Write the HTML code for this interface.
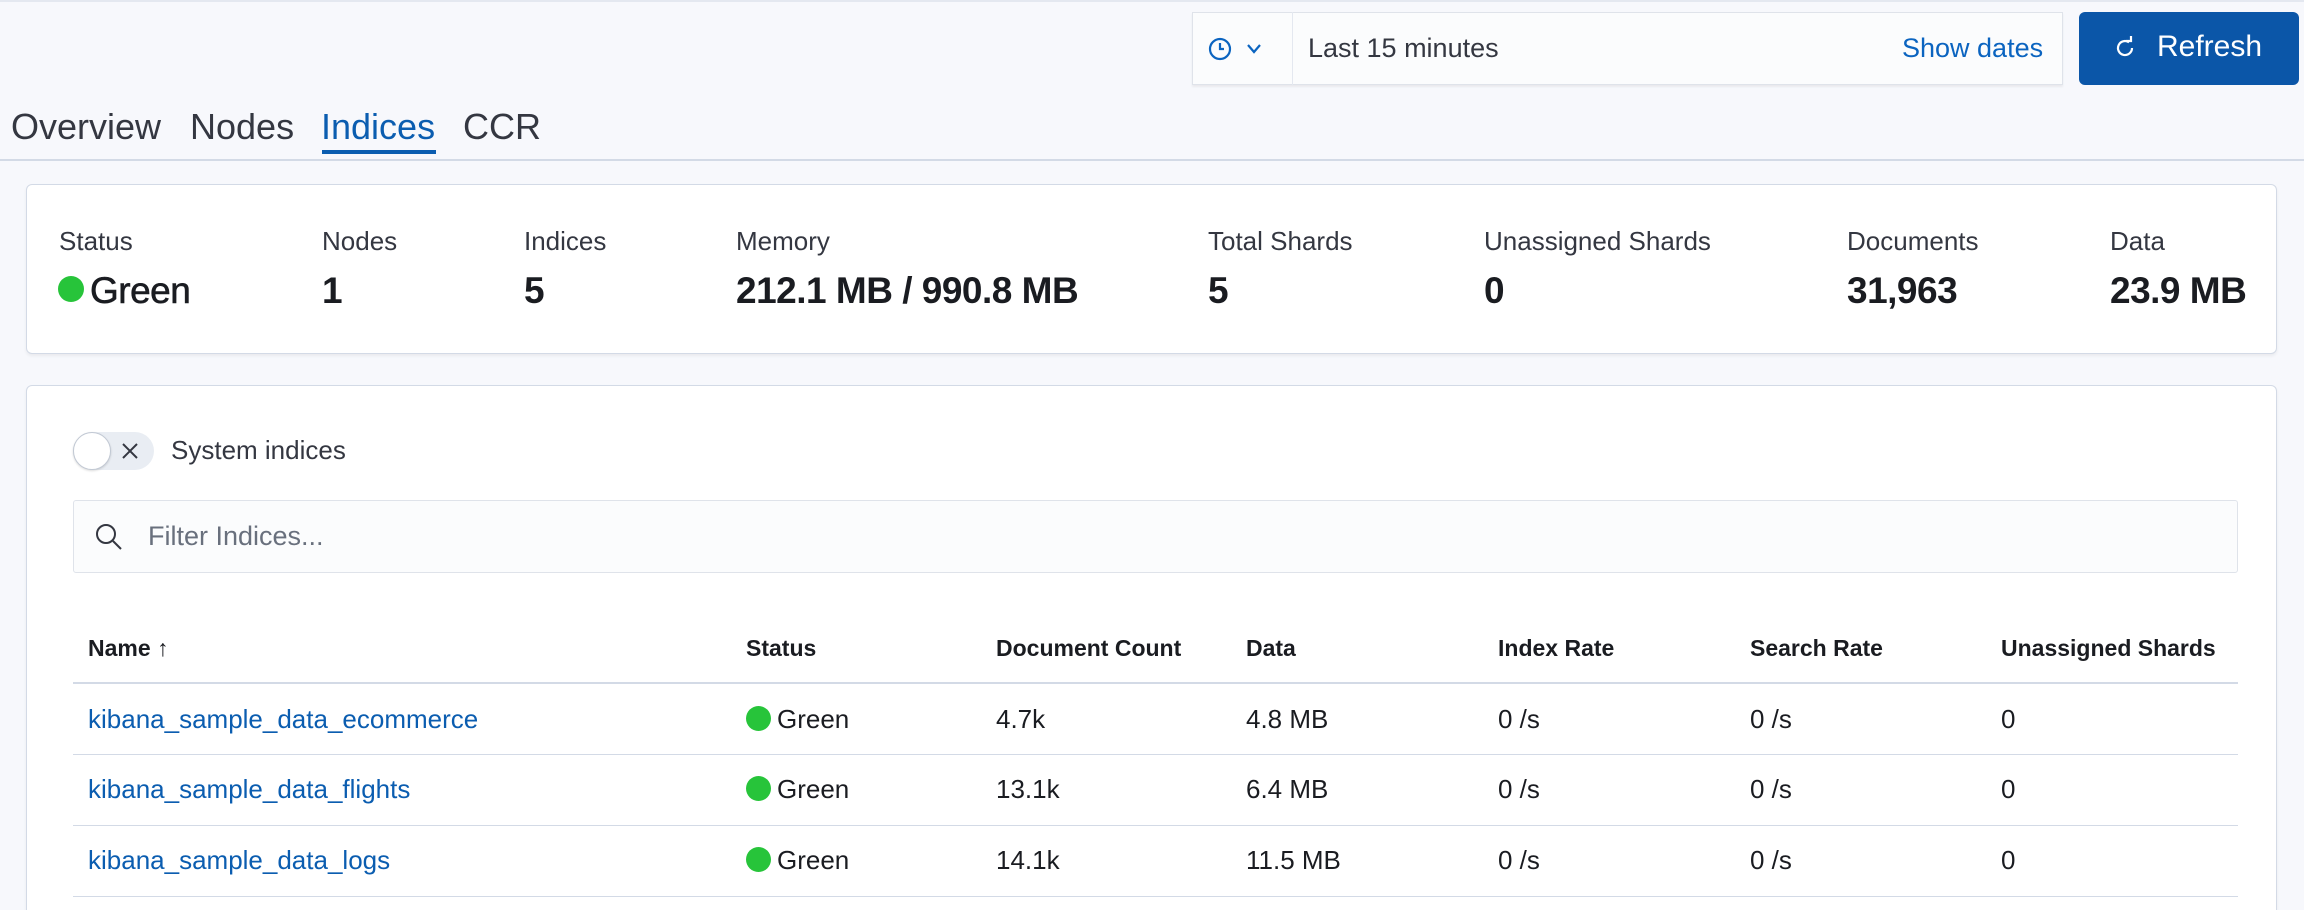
<!DOCTYPE html>
<html><head><meta charset="utf-8"><style>
*{box-sizing:border-box;margin:0;padding:0}
html,body{width:2304px;height:910px;overflow:hidden}
body{background:#f7f8fc;font-family:"Liberation Sans",sans-serif;color:#1a1c21}
#w{position:relative;width:2304px;height:910px;overflow:hidden}
.a{position:absolute;white-space:nowrap}
.panel{position:absolute;background:#fff;border:1px solid #d3dae6;border-radius:6px;box-shadow:0 2px 3px rgba(0,0,0,.06)}
.lab{font-size:26px;color:#343741;top:226px}
.val{font-size:37px;font-weight:bold;top:270px;letter-spacing:-0.5px}
.th{font-size:23px;font-weight:bold;top:635px}
.td{font-size:26px}
.lnk{color:#0b5db0}
.dot{display:inline-block;width:25px;height:25px;border-radius:50%;background:#27c43a;vertical-align:-3px;margin-right:6px}
.hr{position:absolute;left:73px;width:2165px;height:2px;background:#d3dae6}
</style></head><body><div id="w">
<div class="a" style="left:0;top:0;width:2304px;height:2px;background:#e4e8f0"></div>
<div class="a" style="left:1192px;top:12px;width:871px;height:73px;background:#fbfcfd;border:1px solid #dfe3ea;box-shadow:0 2px 2px rgba(0,0,0,.06)"></div>
<div class="a" style="left:1292px;top:12px;width:1px;height:73px;background:#e4e8f0"></div>
<svg class="a" style="left:1208px;top:36px" width="56" height="26" viewBox="0 0 56 26"><circle cx="12" cy="13" r="10" fill="none" stroke="#0b64c0" stroke-width="2.2"/><path d="M12 7v6h4" fill="none" stroke="#0b64c0" stroke-width="2.2"/><path d="M40 9l6 7 6-7" fill="none" stroke="#0b64c0" stroke-width="2.2"/></svg>
<div class="a" style="left:1308px;top:33px;font-size:27px;color:#343741">Last 15 minutes</div>
<div class="a" style="left:1902px;top:33px;font-size:27px;color:#0b64c0">Show dates</div>
<div class="a" style="left:2079px;top:12px;width:220px;height:73px;background:#0b56a8;border-radius:6px"></div>
<svg class="a" style="left:2113px;top:36px" width="24" height="24" viewBox="0 0 24 24"><path d="M19 12a7 7 0 1 1-3-5.7" fill="none" stroke="#fff" stroke-width="2.2"/><path d="M13 5h5V0" fill="none" stroke="#fff" stroke-width="2.2"/></svg>
<div class="a" style="left:2157px;top:30px;font-size:30px;color:#fff">Refresh</div>
<div class="a" style="left:11px;top:106px;font-size:36px;color:#343741">Overview</div>
<div class="a" style="left:190px;top:106px;font-size:36px;color:#343741">Nodes</div>
<div class="a" style="left:321px;top:106px;font-size:36px;color:#0b5db0">Indices</div>
<div class="a" style="left:463px;top:106px;font-size:36px;color:#343741">CCR</div>
<div class="a" style="left:322px;top:150px;width:114px;height:4px;background:#0b5db0"></div>
<div class="a" style="left:0;top:159px;width:2304px;height:2px;background:#d3dae6"></div>
<div class="panel" style="left:26px;top:184px;width:2251px;height:170px"></div>
<div class="a lab" style="left:59px">Status</div>
<div class="a lab" style="left:322px">Nodes</div>
<div class="a lab" style="left:524px">Indices</div>
<div class="a lab" style="left:736px">Memory</div>
<div class="a lab" style="left:1208px">Total Shards</div>
<div class="a lab" style="left:1484px">Unassigned Shards</div>
<div class="a lab" style="left:1847px">Documents</div>
<div class="a lab" style="left:2110px">Data</div>
<div class="a val" style="left:58px;font-weight:normal;-webkit-text-stroke:0.6px #1a1c21"><span class="dot" style="width:26px;height:26px;vertical-align:1px"></span>Green</div>
<div class="a val" style="left:322px">1</div>
<div class="a val" style="left:524px">5</div>
<div class="a val" style="left:736px">212.1 MB / 990.8 MB</div>
<div class="a val" style="left:1208px">5</div>
<div class="a val" style="left:1484px">0</div>
<div class="a val" style="left:1847px">31,963</div>
<div class="a val" style="left:2110px">23.9 MB</div>
<div class="panel" style="left:26px;top:385px;width:2251px;height:560px"></div>
<div class="a" style="left:73px;top:432px;width:81px;height:38px;border-radius:19px;background:#e9edf3"></div>
<div class="a" style="left:73px;top:432px;width:38px;height:38px;border-radius:50%;background:#fff;border:1px solid #c2c9d4;box-shadow:0 1px 2px rgba(0,0,0,.15)"></div>
<svg class="a" style="left:121px;top:442px" width="18" height="18" viewBox="0 0 18 18"><path d="M2 2l14 14M16 2L2 16" stroke="#343741" stroke-width="2"/></svg>
<div class="a" style="left:171px;top:435px;font-size:26px;color:#343741">System indices</div>
<div class="a" style="left:73px;top:500px;width:2165px;height:73px;background:#fbfcfd;border:1px solid #dfe3ea;border-radius:3px"></div>
<svg class="a" style="left:94px;top:522px" width="30" height="30" viewBox="0 0 30 30"><circle cx="12" cy="12" r="9" fill="none" stroke="#343741" stroke-width="2"/><path d="M19 19l8 8" stroke="#343741" stroke-width="2"/></svg>
<div class="a" style="left:148px;top:521px;font-size:27px;color:#69707d">Filter Indices...</div>
<div class="a th" style="left:88px">Name <span style="font-weight:normal">&#8593;</span></div>
<div class="a th" style="left:746px">Status</div>
<div class="a th" style="left:996px">Document Count</div>
<div class="a th" style="left:1246px">Data</div>
<div class="a th" style="left:1498px">Index Rate</div>
<div class="a th" style="left:1750px">Search Rate</div>
<div class="a th" style="left:2001px">Unassigned Shards</div>
<div class="hr" style="top:682px"></div>
<div class="hr" style="top:754px;height:1px"></div>
<div class="hr" style="top:825px;height:1px"></div>
<div class="hr" style="top:896px;height:1px"></div>
<div class="a td lnk" style="left:88px;top:704px">kibana_sample_data_ecommerce</div>
<div class="a td lnk" style="left:88px;top:774px">kibana_sample_data_flights</div>
<div class="a td lnk" style="left:88px;top:845px">kibana_sample_data_logs</div>
<div class="a td" style="left:746px;top:704px"><span class="dot"></span>Green</div>
<div class="a td" style="left:746px;top:774px"><span class="dot"></span>Green</div>
<div class="a td" style="left:746px;top:845px"><span class="dot"></span>Green</div>
<div class="a td" style="left:996px;top:704px">4.7k</div>
<div class="a td" style="left:996px;top:774px">13.1k</div>
<div class="a td" style="left:996px;top:845px">14.1k</div>
<div class="a td" style="left:1246px;top:704px">4.8 MB</div>
<div class="a td" style="left:1246px;top:774px">6.4 MB</div>
<div class="a td" style="left:1246px;top:845px">11.5 MB</div>
<div class="a td" style="left:1498px;top:704px">0 /s</div>
<div class="a td" style="left:1498px;top:774px">0 /s</div>
<div class="a td" style="left:1498px;top:845px">0 /s</div>
<div class="a td" style="left:1750px;top:704px">0 /s</div>
<div class="a td" style="left:1750px;top:774px">0 /s</div>
<div class="a td" style="left:1750px;top:845px">0 /s</div>
<div class="a td" style="left:2001px;top:704px">0</div>
<div class="a td" style="left:2001px;top:774px">0</div>
<div class="a td" style="left:2001px;top:845px">0</div>
</div></body></html>
